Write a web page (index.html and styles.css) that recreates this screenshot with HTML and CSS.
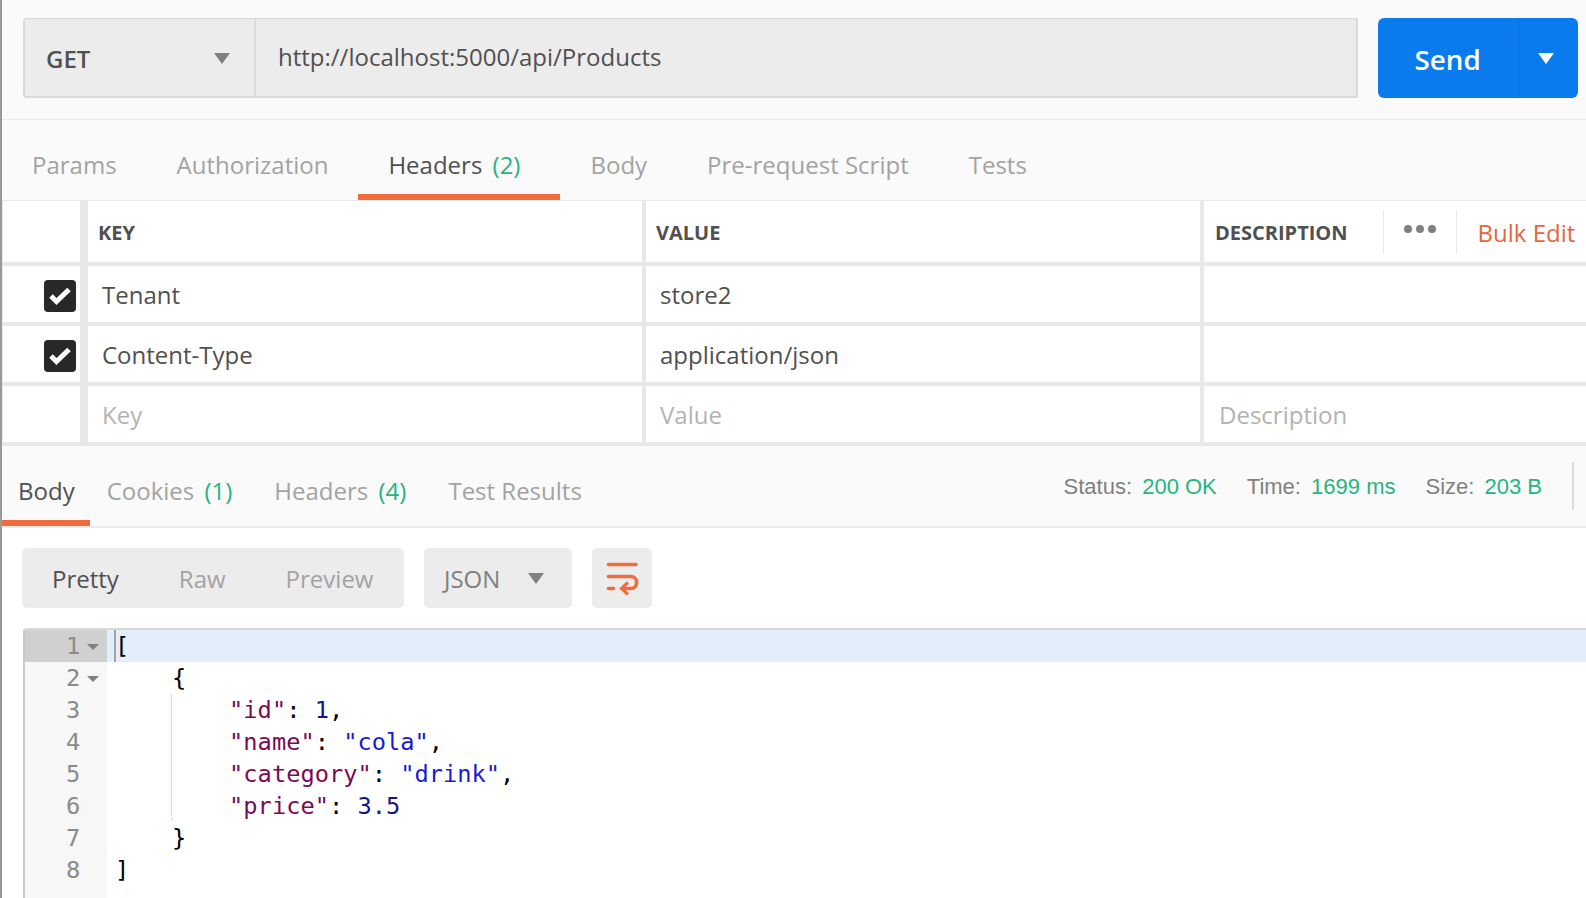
FILE: index.html
```html
<!DOCTYPE html>
<html lang="en">
<head>
    <meta charset="UTF-8">
    <title>Postman request</title>
    <link rel="stylesheet" href="styles.css">
</head>
<body>
    <div class="request-bar">
        <div class="url-box">
            <div class="method">
                <span>GET</span>
                <span class="caret"></span>
            </div>
            <div class="url">http://localhost:5000/api/Products</div>
        </div>
        <div class="send">
            <span class="send-label">Send</span>
            <span class="send-more"><span class="caret caret-white"></span></span>
        </div>
    </div>

    <div class="tabs request-tabs">
        <div class="tab">Params</div>
        <div class="tab">Authorization</div>
        <div class="tab active">Headers <span class="count">(2)</span></div>
        <div class="tab">Body</div>
        <div class="tab">Pre-request Script</div>
        <div class="tab">Tests</div>
    </div>

    <div class="headers-table">
        <div class="row row-head">
            <div class="cell check"></div>
            <div class="cell key">KEY</div>
            <div class="cell value">VALUE</div>
            <div class="cell desc desc-head">
                <span>DESCRIPTION</span>
                <span class="dots"><i></i><i></i><i></i></span>
                <span class="bulk">Bulk Edit</span>
            </div>
        </div>
        <div class="row">
            <div class="cell check">
                <svg class="checkbox" viewBox="0 0 32 32"><rect width="32" height="32" rx="4" fill="#282828"/><path d="M7 16l5.500 5.500L25 9.500" fill="none" stroke="#fff" stroke-width="5"/></svg>
            </div>
            <div class="cell key">Tenant</div>
            <div class="cell value">store2</div>
            <div class="cell desc"></div>
        </div>
        <div class="row">
            <div class="cell check">
                <svg class="checkbox" viewBox="0 0 32 32"><rect width="32" height="32" rx="4" fill="#282828"/><path d="M7 16l5.500 5.500L25 9.500" fill="none" stroke="#fff" stroke-width="5"/></svg>
            </div>
            <div class="cell key">Content-Type</div>
            <div class="cell value">application/json</div>
            <div class="cell desc"></div>
        </div>
        <div class="row placeholder">
            <div class="cell check"></div>
            <div class="cell key">Key</div>
            <div class="cell value">Value</div>
            <div class="cell desc">Description</div>
        </div>
    </div>

    <div class="response-head">
        <div class="tabs response-tabs">
            <div class="tab active">Body</div>
            <div class="tab">Cookies <span class="count">(1)</span></div>
            <div class="tab">Headers <span class="count">(4)</span></div>
            <div class="tab">Test Results</div>
        </div>
        <div class="status">
            <span>Status: <b>200 OK</b></span>
            <span>Time: <b>1699 ms</b></span>
            <span>Size: <b>203 B</b></span>
            <span class="status-line"></span>
        </div>
    </div>

    <div class="response-body">
        <div class="toolbar">
            <div class="view-modes">
                <span class="mode active">Pretty</span>
                <span class="mode">Raw</span>
                <span class="mode">Preview</span>
            </div>
            <div class="format">
                <span class="format-name">JSON</span>
                <span class="caret"></span>
            </div>
            <div class="wrap">
                <svg width="34" height="34" viewBox="0 0 34 34" fill="none" stroke="#f26b3a" stroke-width="3.600" stroke-linecap="round">
                    <path d="M3.500 3.500h27.500"/>
                    <path d="M3.500 15.500h22.500c7.500 0 7.500 12 0 12h-7"/>
                    <path d="M3.500 27.500h5"/>
                    <path d="M23 21.500l-6.500 6 6.500 6" stroke-width="3.200" stroke-linecap="butt"/>
                </svg>
            </div>
        </div>

        <div class="editor">
            <div class="gutter">
                <div class="ln ln-active">1<span class="fold"></span></div>
                <div class="ln">2<span class="fold"></span></div>
                <div class="ln">3</div>
                <div class="ln">4</div>
                <div class="ln">5</div>
                <div class="ln">6</div>
                <div class="ln">7</div>
                <div class="ln">8</div>
            </div>
            <div class="code">
                <span class="indent-guide"></span>
                <div class="line line-active"><span class="cursor"></span>[</div>
                <div class="line">    {</div>
                <div class="line">        <span class="k">"id"</span>: <span class="n">1</span>,</div>
                <div class="line">        <span class="k">"name"</span>: <span class="s">"cola"</span>,</div>
                <div class="line">        <span class="k">"category"</span>: <span class="s">"drink"</span>,</div>
                <div class="line">        <span class="k">"price"</span>: <span class="n">3.5</span></div>
                <div class="line">    }</div>
                <div class="line">]</div>
            </div>
        </div>
    </div>
</body>
</html>
```

FILE: styles.css
```css
html, body {
    margin: 0;
    padding: 0;
    height: 100%;
}

body {
    width: 1586px;
    height: 898px;
    box-sizing: border-box;
    overflow: hidden;
    border-left: 2px solid #9a9a9a;
    background-color: #fafafa;
    font-family: "Open Sans", sans-serif;
    font-size: 24px;
    color: #505050;
}

.caret {
    display: inline-block;
    width: 0;
    height: 0;
    border-left: 8px solid transparent;
    border-right: 8px solid transparent;
    border-top: 11px solid #808080;
}

.caret-white {
    border-top-color: #fff;
}

/* request bar */
.request-bar {
    display: flex;
    box-sizing: border-box;
    height: 120px;
    padding: 18px 8px 0 21px;
    border-bottom: 1px solid #ececec;
}

.url-box {
    display: flex;
    width: 1336px;
    height: 80px;
    box-sizing: border-box;
    background-color: #ececec;
    border: 2px solid #d8d8d8;
    border-top-width: 1px;
    border-radius: 4px 0 0 4px;
}

.method {
    display: flex;
    justify-content: space-between;
    align-items: center;
    width: 231px;
    box-sizing: border-box;
    padding: 2px 24px 0 21px;
    border-right: 2px solid #dcdcdc;
    font-weight: 600;
}

.url {
    padding: 18px 0 0 22px;
    line-height: 40px;
}

.send {
    display: flex;
    width: 200px;
    height: 80px;
    margin-left: 20px;
    background-color: #097bed;
    border-radius: 6px;
    color: #fff;
    font-size: 27.8px;
    font-weight: 600;
}

.send-label {
    width: 139px;
    padding-right: 1px;
    text-align: center;
    line-height: 82px;
    border-right: 1px solid #0a6fd6;
    box-sizing: content-box;
}

.send-more {
    flex: 1;
    display: flex;
    align-items: center;
    justify-content: center;
    padding-right: 6px;
}

/* tabs */
.tabs {
    display: flex;
    color: #a3a3a3;
}

.tab {
    box-sizing: border-box;
    border-bottom: 6px solid transparent;
}

.tab.active {
    color: #505050;
    border-bottom-color: #f26b3a;
}

.count {
    color: #26b47f;
    margin-left: 4px;
}

.request-tabs {
    height: 80px;
    line-height: 90px;
}

.request-tabs .tab {
    padding: 0 30px;
}

.request-tabs .tab.active {
    padding-right: 40px;
}

/* headers table */
.headers-table {
    background-color: #e8e8e8;
    padding-top: 1px;
}

.row {
    display: flex;
    height: 56px;
    margin-bottom: 4px;
}

.row-head {
    height: 61px;
}

.cell {
    box-sizing: border-box;
    background-color: #fff;
    padding: 0 12px 0 14px;
    line-height: 58px;
    white-space: nowrap;
}

.check {
    display: flex;
    align-items: center;
    justify-content: flex-end;
    width: 77px;
    margin-left: 1px;
    margin-right: 8px;
    padding: 4px 4px 0 0;
}

.checkbox {
    width: 32px;
    height: 32px;
}

.key,
.value {
    width: 554px;
    margin-right: 4px;
}

.desc {
    flex: 1;
    overflow: hidden;
    padding-left: 15px;
}

.row-head .cell {
    padding-left: 10px;
    font-size: 20px;
    font-weight: 700;
    line-height: 63px;
}

.row-head .check {
    padding: 0;
}

.row-head .desc-head {
    display: flex;
    padding-left: 11px;
}

.desc-head > span {
    flex-shrink: 0;
}

.dots {
    display: flex;
    align-items: center;
    gap: 4px;
    width: 74px;
    height: 44px;
    margin: 9px 0 0 35px;
    padding-left: 20px;
    box-sizing: border-box;
    border-left: 1px solid #e8e8e8;
    border-right: 1px solid #e8e8e8;
}

.dots i {
    width: 8px;
    height: 8px;
    margin-top: -6px;
    border-radius: 50%;
    background-color: #808080;
}

.bulk {
    margin-left: 21px;
    color: #e8663a;
    font-size: 24px;
    font-weight: 400;
}

.placeholder .cell {
    color: #b3b3b3;
}

/* response head */
.response-head {
    display: flex;
    justify-content: space-between;
    box-sizing: border-box;
    height: 86px;
    margin-top: -4px;
    border-top: 4px solid #e8e8e8;
    border-bottom: 2px solid #ececec;
}

.response-tabs {
    height: 80px;
    line-height: 90px;
}

.response-tabs .tab {
    padding: 0 21px;
}

.response-tabs .tab.active {
    padding: 0 15px 0 16px;
}

.response-tabs .tab.active + .tab {
    padding-left: 17px;
}

.status {
    display: flex;
    align-items: flex-start;
    gap: 30px;
    padding: 26px 12px 0 0;
    font-family: "Liberation Sans", sans-serif;
    font-size: 22px;
    line-height: 30px;
    color: #808080;
}

.status b {
    font-weight: 400;
    color: #26b47f;
    margin-left: 4px;
}

.status-line {
    width: 2px;
    height: 48px;
    margin-top: -10px;
    background-color: #dcdcdc;
}

/* response body */
.response-body {
    background-color: #fff;
    height: 370px;
    padding: 20px 0 0 20px;
}

.toolbar {
    display: flex;
    gap: 20px;
    height: 60px;
    line-height: 62px;
}

.view-modes, .format, .wrap {
    background-color: #ececec;
    border-radius: 5px;
}

.view-modes {
    display: flex;
    width: 382px;
    padding-left: 30px;
    box-sizing: border-box;
    gap: 60px;
    color: #a3a3a3;
}

.mode.active {
    color: #505050;
}

.format {
    display: flex;
    align-items: center;
    gap: 28px;
    width: 148px;
    box-sizing: border-box;
    padding-left: 20px;
    color: #808080;
}

.format-name {
    padding-top: 2px;
}

.wrap {
    display: flex;
    align-items: center;
    justify-content: center;
    width: 60px;
}

/* code */
.editor {
    display: flex;
    margin: 20px 0 0 1px;
    border-left: 2px solid #c8c8c8;
    border-top: 2px solid #d8d8d8;
    border-radius: 4px 0 0 0;
    font-family: "DejaVu Sans Mono", monospace;
    font-size: 23.7px;
    line-height: 32px;
}

.gutter {
    width: 82px;
    height: 268px;
    flex-shrink: 0;
    background-color: #f7f7f7;
    color: #8a8a8a;
}

.ln {
    display: flex;
    padding-left: 41px;
    height: 32px;
}

.ln-active {
    background-color: #d0d0d0;
}

.fold {
    width: 0;
    height: 0;
    margin: 14px 0 0 7px;
    border-left: 6px solid transparent;
    border-right: 6px solid transparent;
    border-top: 6px solid #808080;
}

.code {
    position: relative;
    flex: 1;
    color: #000;
}

.line {
    height: 32px;
    padding-left: 8px;
    white-space: pre;
}

.line-active {
    position: relative;
    background-color: #e4eefa;
}

.cursor {
    position: absolute;
    left: 7px;
    top: 0;
    width: 2px;
    height: 32px;
    background-color: #9aa4b4;
}

.indent-guide {
    position: absolute;
    left: 64px;
    top: 65px;
    height: 125px;
    border-left: 1px dotted #bbb;
}

.k {
    color: #7a0a55;
}

.s {
    color: #1a1ad0;
}

.n {
    color: #15158a;
}
```
